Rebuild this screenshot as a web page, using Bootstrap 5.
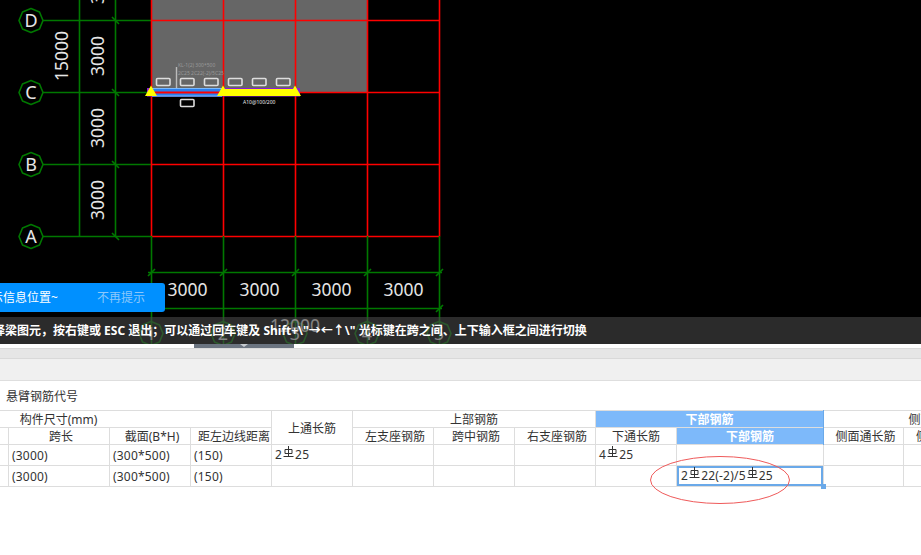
<!DOCTYPE html>
<html lang="zh-CN">
<head>
  <meta charset="UTF-8">
  <title>悬臂钢筋代号</title>
  <link href="https://cdn.jsdelivr.net/npm/bootstrap@5.3.0/dist/css/bootstrap.min.css" rel="stylesheet">
  <style>
    html, body { height: 100%; overflow: hidden; background: #fff; }
    body { font: 12px/16px "Noto Sans", "Noto Sans CJK SC", sans-serif; color: #333; }
    .cad-area { height: 344px; background: #000; }
    .cad-svg { display: block; }
    .cad-svg text { font-family: "Noto Sans", sans-serif; fill: #e6e6e6; }
    .cad-svg .dim { font-size: 17.5px; }
    .cad-svg .axis { font-size: 18px; }
    .cad-svg .tiny { font-size: 5px; fill: #999; }
    .line-g { stroke: #007800; stroke-width: 1.6; fill: none; }
    .line-r { stroke: #f00; stroke-width: 1.6; fill: none; }
    .tip-box { left: -100px; top: 283px; width: 265px; height: 29px; background: #0090ff; color: #fff; border-radius: 3px; }
    .tip-off { color: #8cc8fb; margin-left: 39px; margin-right: 20px; }
    .status-bar { left: 0; right: 0; top: 317px; height: 27px; background: rgba(70, 70, 70, .62); color: #fff; font-weight: 700; white-space: nowrap; }
    .status-text { margin-left: -7px; }
    .split-handle { height: 4px; }
    .split-grip { left: 194px; top: 0; width: 100px; height: 4px; background: #6b7480; }
    .split-grip::after { content: ""; position: absolute; left: 46px; top: 0; border: 4px solid transparent; border-top: 3px solid #c8ccd0; border-bottom: 0; }
    .strip-one { height: 11px; background: #e6e6e6; border-top: 1px solid #d9d9d9; border-bottom: 1px solid #d9d9d9; }
    .strip-two { height: 22px; background: #f0f0f0; border-bottom: 1px solid #dedede; }
    .code-label { height: 29px; padding: 3px 0 0 6px; }
    .grid-wrap { height: 145px; overflow: hidden; }
    .rebar-table { table-layout: fixed; width: 1196px; margin: 0 0 0 -155px; border-color: #ddd; font-size: 12px; line-height: 15px; color: #333; }
    .rebar-table > :not(caption) > * > * { padding: 0 3px; background: transparent; color: inherit; box-shadow: none; vertical-align: middle; overflow: hidden; white-space: nowrap; }
    .rebar-table thead tr { height: 17px; }
    .rebar-table tbody tr { height: 21px; }
    .rebar-table tbody td { letter-spacing: .2px; }
    .rebar-table thead th { font-weight: 400; text-align: center; padding-top: 1px; }
    .rebar-table > thead > tr > .head-nudge { padding-left: 7px; }
    .rebar-table > tbody > tr > .rebar-cell { padding-bottom: 3px; }
    .rebar-table > :not(caption) > * > .head-on { background: #7db9fa; color: #fff; border-color: #6aa9e9; font-weight: 700; }
    .rebar-table > :not(caption) > * > .cell-on { box-shadow: inset 0 0 0 2px #6aa9e9; padding-left: 4px; padding-bottom: 2px; }
    .rebar-mark { width: 11px; height: 12px; margin: 0 1px; vertical-align: 1px; }
    .fill-dot { left: 821px; top: 74px; width: 5px; height: 5px; background: #6aa9e9; }
    .ring-note { left: 648px; top: 45px; }
  </style>
</head>
<body>

  <svg width="0" height="0" class="position-absolute">
    <symbol id="rebar" viewBox="0 0 11 12">
      <path d="M2 3.5h7v4H2zM5.5 0v10.5M.5 10.5h10" fill="none" stroke="#333" stroke-width="1"/>
    </symbol>
  </svg>

  <!-- drawing area -->
  <div class="cad-area position-relative overflow-hidden">
    <svg class="cad-svg" width="921" height="344" viewBox="0 0 921 344">
      <rect x="151" y="0" width="216" height="92" fill="#666"/>

      <path class="line-g" d="M79.5 0V236.5M115.5 0V236.5M43 20.5H151M43 92.5H151M43 164.5H151M43 236.5H151"/>
      <path class="line-g" d="M112 17l7 7M112 89l7 7M112 161l7 7M112 233l7 7"/>
      <path class="line-r" d="M151.5 0V236.5M223.5 0V236.5M295.5 0V236.5M367.5 0V236.5M439.5 0V236.5"/>
      <path class="line-r" d="M151 20.5H440M295 92.5H440M151 164.5H440M151 236.5H440"/>
      <path class="line-g" d="M151.5 236V344M223.5 236V344M295.5 236V344M367.5 236V344M439.5 236V344M148 272.5H442M148 308.5H442"/>
      <path class="line-g" d="M148 276l7-7M220 276l7-7M292 276l7-7M364 276l7-7M436 276l7-7M436 312l7-7"/>

      <!-- axis bubbles -->
      <g class="line-g">
        <path id="bub" d="M31 8.5l8.5 3.5 3.5 8.5-3.5 8.5-8.5 3.5-8.5-3.5-3.5-8.5 3.5-8.5z" stroke-linejoin="round"/>
        <use href="#bub" y="72"/>
        <use href="#bub" y="144"/>
        <use href="#bub" y="216"/>
        <use href="#bub" x="120" y="313"/>
        <use href="#bub" x="192" y="313"/>
        <use href="#bub" x="264" y="313"/>
        <use href="#bub" x="336" y="313"/>
        <use href="#bub" x="408" y="313"/>
      </g>
      <g class="axis" text-anchor="middle">
        <text x="31" y="27">D</text>
        <text x="31" y="99">C</text>
        <text x="31" y="171">B</text>
        <text x="31" y="243">A</text>
        <text x="151" y="340">1</text>
        <text x="223" y="340">2</text>
        <text x="295" y="340">3</text>
        <text x="367" y="340">4</text>
        <text x="439" y="340">5</text>
      </g>

      <!-- dimensions -->
      <g class="dim" text-anchor="middle">
        <text transform="translate(68 56) rotate(-90)">15000</text>
        <text transform="translate(104 -16) rotate(-90)">3000</text>
        <text transform="translate(104 56) rotate(-90)">3000</text>
        <text transform="translate(104 128) rotate(-90)">3000</text>
        <text transform="translate(104 200) rotate(-90)">3000</text>
        <text x="187.5" y="296">3000</text>
        <text x="259.5" y="296">3000</text>
        <text x="331.5" y="296">3000</text>
        <text x="403.5" y="296">3000</text>
        <text x="295" y="332">12000</text>
      </g>

      <!-- beams -->
      <rect x="147" y="88" width="153" height="8.5" fill="#8a1bd8"/>
      <rect x="152" y="88" width="70" height="8.5" fill="#2a80f0"/>
      <path d="M152 88.5H222M152 96H222" stroke="#7db9fa" stroke-width="1"/>
      <path d="M152 92.5H222" stroke="#f00" stroke-width="2"/>
      <rect x="223" y="89" width="72" height="7" fill="#ff0"/>
      <path d="M151 85.5l6 10.5h-12zM223 85.5l6 10.5h-12zM295 85.5l6 10.5h-12z" fill="#ff0"/>
      <path d="M176.5 67V88" stroke="#bbb" stroke-width="1.4"/>
      <g fill="none" stroke="#ddd" stroke-width="1.6">
        <rect x="156.5" y="78.5" width="13.5" height="7" rx="1"/>
        <rect x="180.5" y="78.5" width="13.5" height="7" rx="1"/>
        <rect x="204.5" y="78.5" width="13.5" height="7" rx="1"/>
        <rect x="228.5" y="78.5" width="13.5" height="7" rx="1"/>
        <rect x="252.5" y="78.5" width="13.5" height="7" rx="1"/>
        <rect x="276.5" y="78.5" width="13.5" height="7" rx="1"/>
        <rect x="180.5" y="99.5" width="13.5" height="7" rx="1"/>
      </g>
      <text class="tiny" x="178" y="67">KL-1(2) 300*500</text>
      <text class="tiny" x="178" y="75">2C25 2C22(-2)/5C25</text>
      <text class="tiny" x="243" y="104" style="fill:#eee">A10@100/200</text>
    </svg>

    <div class="tip-box position-absolute d-flex align-items-center justify-content-end">
      <span>提示信息位置~</span><span class="tip-off">不再提示</span>
    </div>
    <div class="status-bar position-absolute d-flex align-items-center">
      <span class="status-text">择梁图元，按右键或 ESC 退出；可以通过回车键及 Shift+\"→←↑\" 光标键在跨之间、上下输入框之间进行切换</span>
    </div>
  </div>

  <div class="split-handle position-relative"><div class="split-grip position-absolute"></div></div>
  <div class="strip-one"></div>
  <div class="strip-two"></div>

  <div class="code-label d-flex align-items-center">悬臂钢筋代号</div>

  <!-- rebar input grid -->
  <div class="grid-wrap position-relative">
    <table class="rebar-table table table-bordered">
      <colgroup>
        <col style="width:163px"><col style="width:101px"><col style="width:81px"><col style="width:81px">
        <col style="width:81px"><col style="width:81px"><col style="width:81px"><col style="width:81px">
        <col style="width:81px"><col style="width:147px"><col style="width:80px"><col style="width:81px"><col style="width:57px">
      </colgroup>
      <thead>
        <tr>
          <th colspan="4">构件尺寸(mm)</th>
          <th rowspan="2">上通长筋</th>
          <th colspan="3">上部钢筋</th>
          <th colspan="2" class="head-on">下部钢筋</th>
          <th colspan="3">侧面钢筋</th>
        </tr>
        <tr>
          <th></th><th class="head-nudge">跨长</th><th class="head-nudge">截面(B*H)</th><th class="head-nudge">距左边线距离</th>
          <th class="head-nudge">左支座钢筋</th><th class="head-nudge">跨中钢筋</th><th class="head-nudge">右支座钢筋</th>
          <th>下通长筋</th><th class="head-on">下部钢筋</th>
          <th class="head-nudge">侧面通长筋</th><th class="head-nudge">侧面原位筋</th><th></th>
        </tr>
      </thead>
      <tbody>
        <tr>
          <td></td><td>(3000)</td><td>(300*500)</td><td>(150)</td>
          <td class="rebar-cell">2<svg class="rebar-mark"><use href="#rebar"/></svg>25</td>
          <td></td><td></td><td></td>
          <td class="rebar-cell">4<svg class="rebar-mark"><use href="#rebar"/></svg>25</td>
          <td></td><td></td><td></td><td></td>
        </tr>
        <tr>
          <td></td><td>(3000)</td><td>(300*500)</td><td>(150)</td>
          <td></td><td></td><td></td><td></td><td></td>
          <td class="cell-on">2<svg class="rebar-mark"><use href="#rebar"/></svg>22(-2)/5<svg class="rebar-mark"><use href="#rebar"/></svg>25</td>
          <td></td><td></td><td></td>
        </tr>
      </tbody>
    </table>
    <div class="fill-dot position-absolute"></div>
    <svg class="ring-note position-absolute" width="144" height="50" viewBox="0 0 144 50">
      <ellipse cx="72" cy="25" rx="69.5" ry="23.5" fill="none" stroke="#ef5a5a" stroke-width="1"/>
    </svg>
  </div>

  <script src="https://cdn.jsdelivr.net/npm/bootstrap@5.3.0/dist/js/bootstrap.bundle.min.js"></script>
</body>
</html>
